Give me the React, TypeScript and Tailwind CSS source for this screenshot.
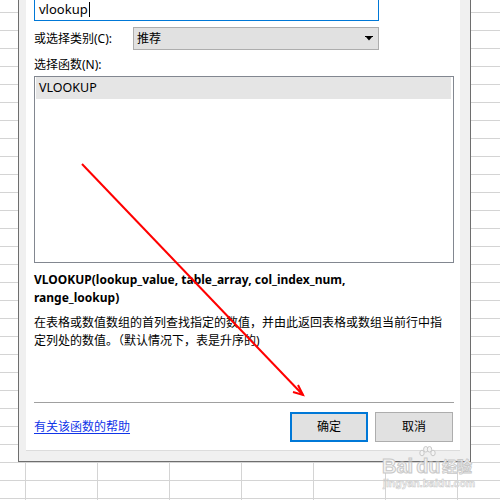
export default function App() {
  return (
    <div className="relative h-[500px] w-[500px] overflow-hidden bg-white bg-[linear-gradient(to_right,#d4d4d4_1px,transparent_1px),linear-gradient(to_bottom,#d4d4d4_1px,transparent_1px)] bg-size-[72px_18px] bg-position-[25px_12px] font-['Noto_Sans','Noto_Sans_CJK_SC',sans-serif] text-[12px] text-black">
      {/* dialog */}
      <div className="ml-[18px] h-[462px] w-[453px] border-x border-b border-[#6e6e6e] bg-[#f0f0f0] pb-[10px] pl-[7px] pr-[10px]">
        <div className="flex h-full flex-col border-b border-[#dcdcdc] bg-white pl-[8px] pr-[6px]">
          <div className="-mt-[6px] flex h-[27px] w-[345px] items-end border border-[#0078d7] pb-[2px] pl-[4px]">
            <span className="text-[13px] leading-[18px]">vlookup</span>
            <span className="mb-[1px] ml-[1px] h-[15px] w-px bg-black" />
          </div>

          <div className="mt-[6px] flex h-[23px] items-center">
            <span className="w-[99px] leading-[18px]">或选择类别(C):</span>
            <div className="flex h-[23px] w-[246px] items-center justify-between border border-[#adadad] bg-[#e1e1e1] pl-[3px] pr-[5px]">
              <span>推荐</span>
              <svg width="8" height="5" viewBox="0 0 8 5">
                <rect x="0" y="0" width="8" height="1" fill="#000" />
                <polygon points="1,1 7,1 4,4.5" fill="#000" />
              </svg>
            </div>
          </div>

          <div className="mt-[6px] h-[18px] leading-[18px]">选择函数(N):</div>

          <div className="mt-[2px] h-[187px] w-[420px] border border-[#828790] pl-px pr-[2px]">
            <div className="flex h-[22px] items-center bg-[#e5e5e5] pl-[3px] text-[12.5px]">VLOOKUP</div>
          </div>

          <div className="mt-[8px] font-bold leading-[18px]">
            <div>VLOOKUP(lookup_value, table_array, col_index_num,</div>
            <div>range_lookup)</div>
          </div>

          <div className="mt-[7px] leading-[18px]">
            <div>在表格或数值数组的首列查找指定的数值，并由此返回表格或数组当前行中指</div>
            <div>定列处的数值。（默认情况下，表是升序的)</div>
          </div>

          <div className="mt-[52px] h-px w-[420px] bg-[#a0a0a0]" />

          <div className="mt-[9px] flex h-[30px] w-[419px] items-center justify-between">
            <span className="text-[#1035e8] underline underline-offset-2">有关该函数的帮助</span>
            <div className="flex gap-[7px]">
              <button className="flex h-[30px] w-[78px] items-center justify-center border-2 border-[#0078d7] bg-[#e1e1e1]">
                确定
              </button>
              <button className="flex h-[30px] w-[78px] items-center justify-center border border-[#adadad] bg-[#e1e1e1]">
                取消
              </button>
            </div>
          </div>
        </div>
      </div>

      {/* red arrow drawn over the dialog */}
      <svg className="pointer-events-none absolute left-0 top-0" width="500" height="500">
        <line x1="82" y1="164" x2="303" y2="395" stroke="#ff0000" strokeWidth="2" />
        <polyline points="298,385 303,395 293,392" fill="none" stroke="#ff0000" strokeWidth="2" />
      </svg>

      {/* baidu watermark */}
      <svg className="pointer-events-none absolute left-[419px] top-[446px]" width="17" height="13" viewBox="0 0 17 13">
        <g fill="#f4f4f4" stroke="#c8c8c8">
          <ellipse cx="3" cy="7" rx="2.2" ry="2.8" />
          <ellipse cx="6.8" cy="3.3" rx="2.2" ry="2.8" />
          <ellipse cx="10.5" cy="3.3" rx="2.2" ry="2.8" />
          <ellipse cx="14" cy="7" rx="2.2" ry="2.8" />
        </g>
      </svg>
      <div className="pointer-events-none absolute left-[382px] top-[456px] flex h-[20px] gap-[3px] whitespace-nowrap font-['Liberation_Sans',sans-serif] text-[20px] font-bold leading-[20px] text-[#f4f4f4] [-webkit-text-stroke:1px_#c8c8c8]">
        <span>Bai</span>
        <span>du</span>
      </div>
      <div className="pointer-events-none absolute left-[442px] top-[456px] h-[20px] whitespace-nowrap font-['Noto_Sans_CJK_SC',sans-serif] text-[15px] font-bold leading-[20px] text-[#f4f4f4] [-webkit-text-stroke:0.8px_#c8c8c8]">
        经验
      </div>
      <div className="pointer-events-none absolute left-[383px] top-[477px] h-[12px] whitespace-nowrap font-['Liberation_Sans',sans-serif] text-[10.5px] font-bold leading-[12px] text-[#f4f4f4] [-webkit-text-stroke:0.5px_#c8c8c8]">
        jingyan.baidu.com
      </div>
    </div>
  )
}
